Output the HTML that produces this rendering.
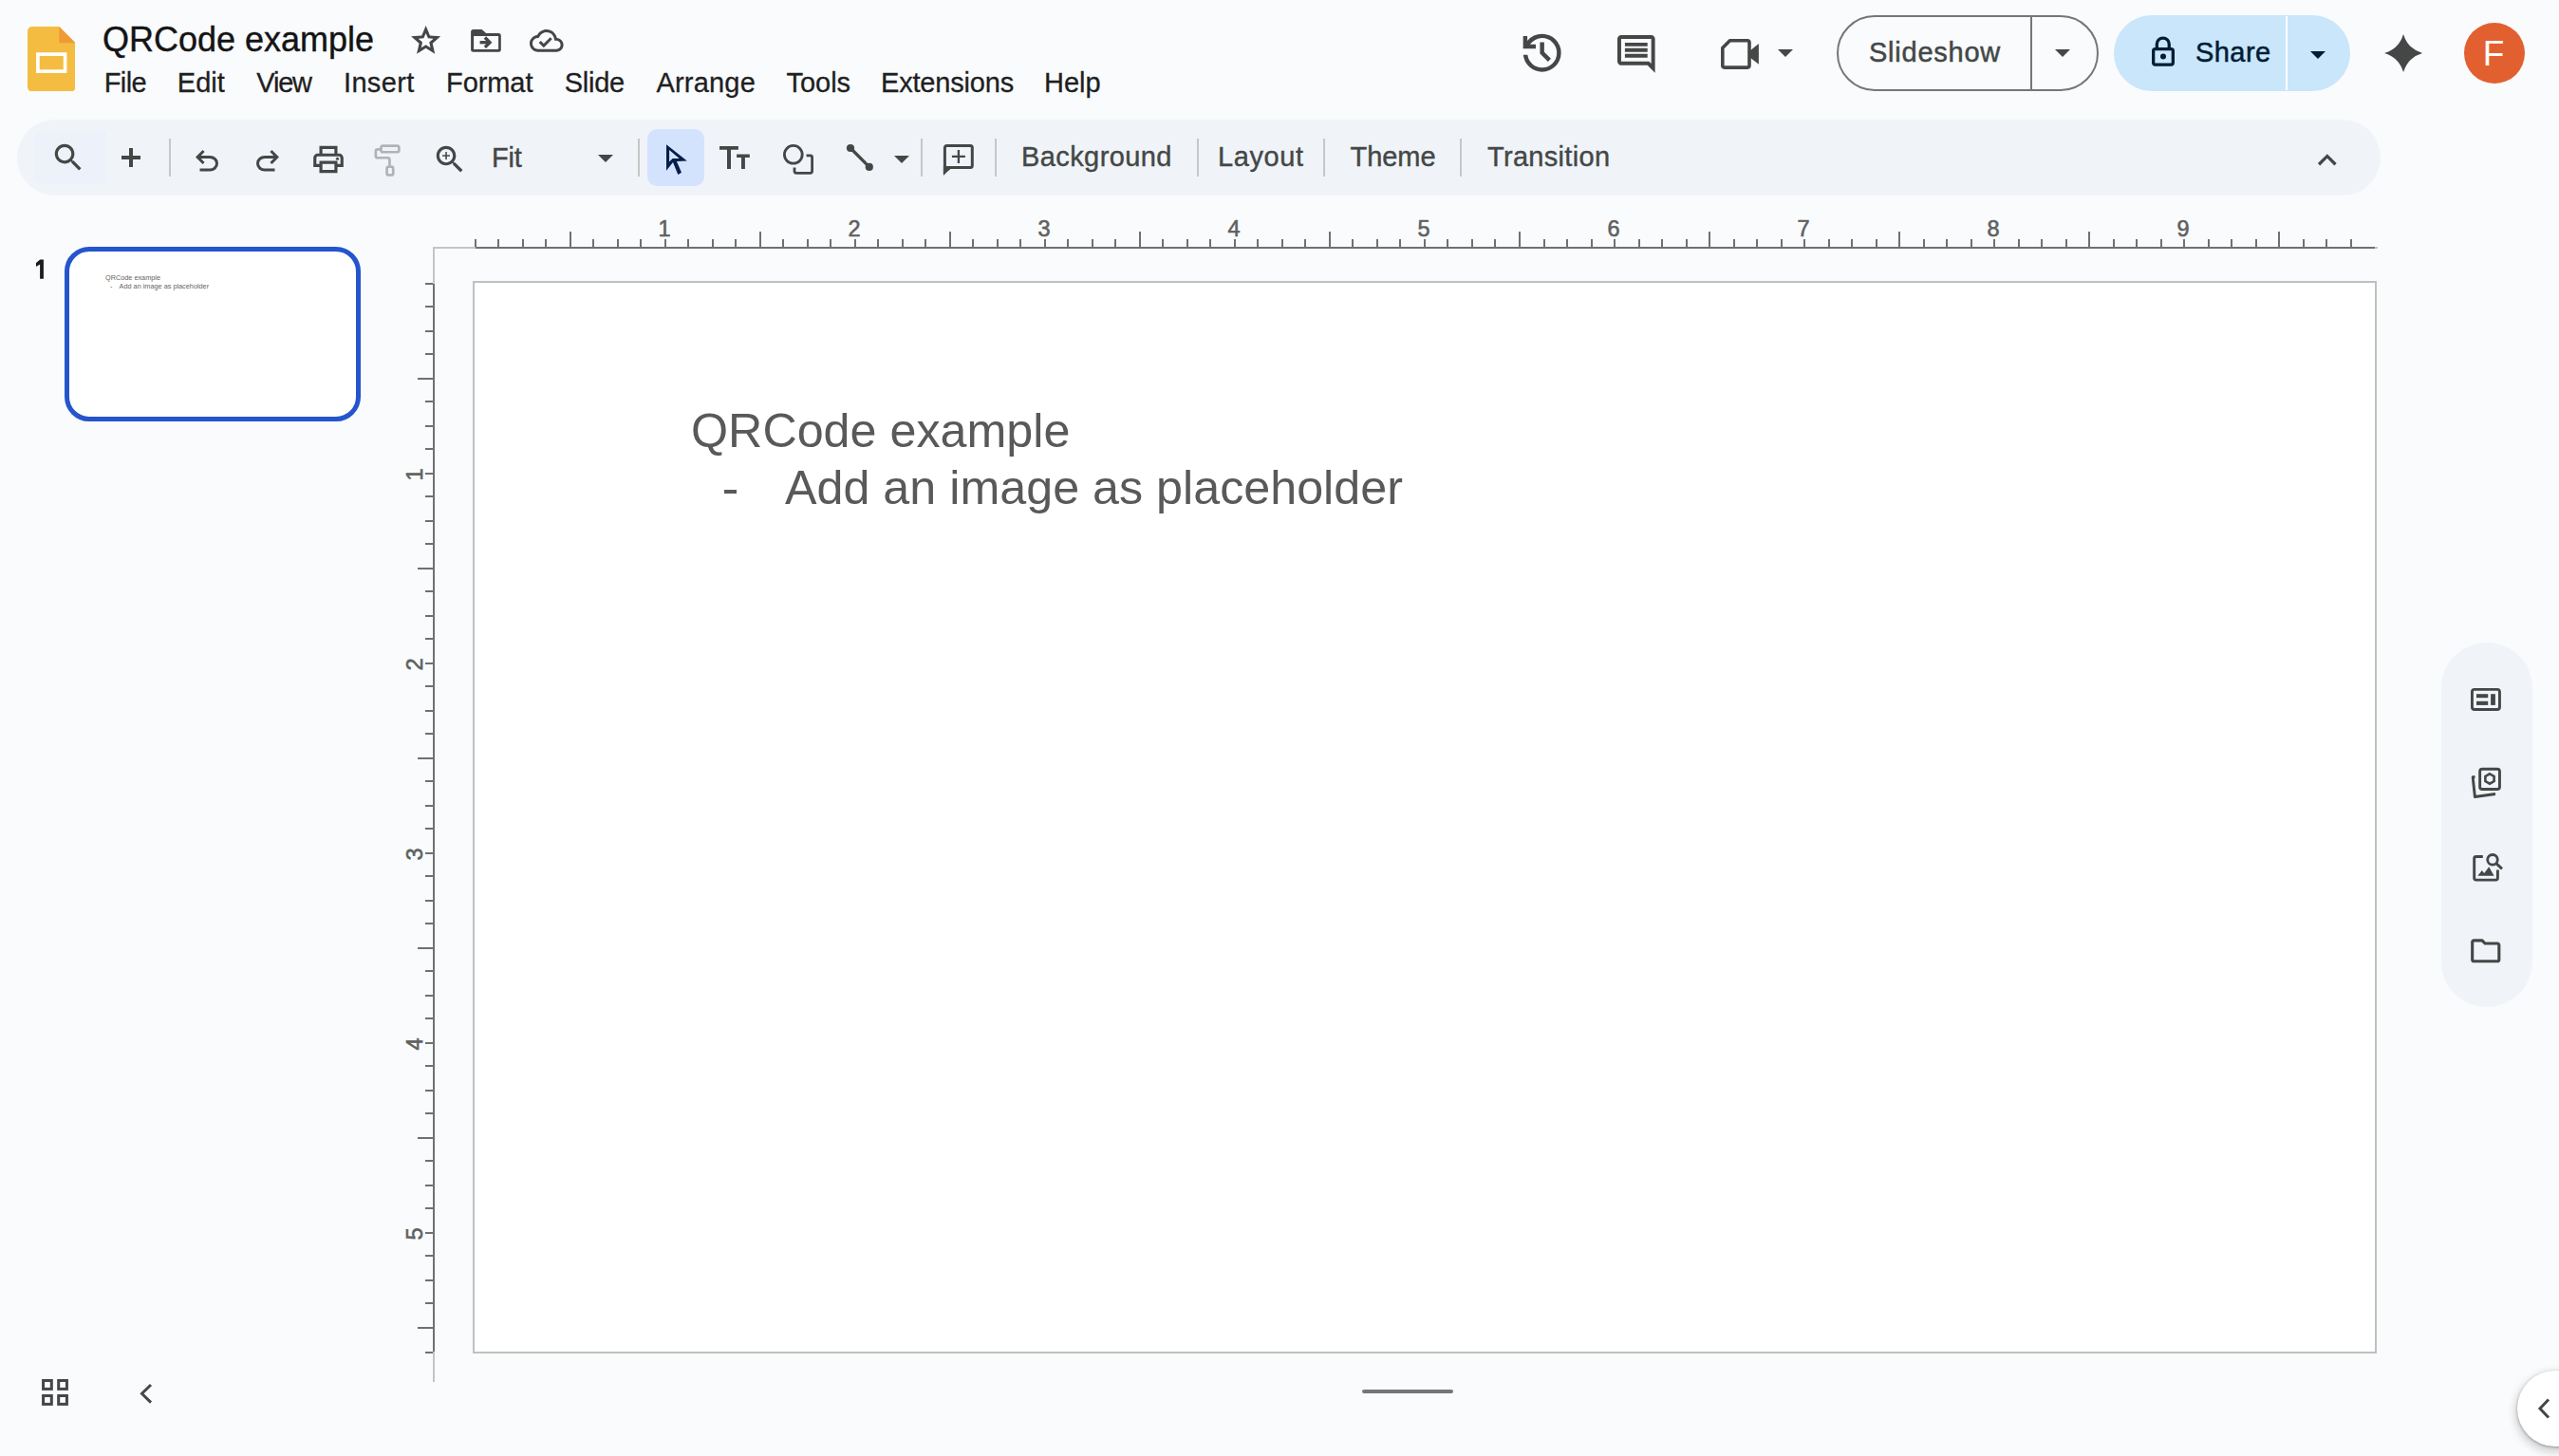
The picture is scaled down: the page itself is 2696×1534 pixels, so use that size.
<!DOCTYPE html>
<html><head><meta charset="utf-8">
<style>
html,body{margin:0;padding:0;}
body{width:2696px;height:1534px;overflow:hidden;background:#f9fbfd;position:relative;font-family:"Liberation Sans",sans-serif;color:#1f1f1f;}
.a{position:absolute;}
.t{position:absolute;white-space:nowrap;line-height:1;}
svg{position:absolute;display:block;}
.menu{font-size:29px;color:#1f1f1f;top:73px;-webkit-text-stroke:0.3px #1f1f1f;}
.tb{font-size:29px;color:#444746;top:151px;-webkit-text-stroke:0.4px #444746;}
.dv{position:absolute;width:2px;background:#c7c7c7;top:146px;height:40px;}
.ic{fill:#444746;}
</style></head><body>

<!-- logo -->
<svg style="left:28.76px;top:27.6px" width="50.5" height="68.6" viewBox="0 0 50.5 68.6">
  <path d="M5 0H33.24L50.5 17.2V63.6a5 5 0 0 1 -5 5H5a5 5 0 0 1 -5 -5V5a5 5 0 0 1 5 -5z" fill="#f4bc40"/>
  <path d="M33.24 0L50.5 17.2H33.24z" fill="#f09a36"/>
  <rect x="10.89" y="29.1" width="28.7" height="18.05" fill="none" stroke="#fff" stroke-width="3.7"/>
</svg>

<div class="t" style="left:108px;top:24px;font-size:36px;color:#141414;-webkit-text-stroke:0.4px #141414;">QRCode example</div>

<!-- title icons -->
<svg style="left:429.6px;top:24.0px" width="37.3" height="37.3" viewBox="0 -960 960 960"><path class="ic" d="m354-287 126-76 126 77-33-144 111-96-146-13-58-136-58 135-146 13 111 97-33 143ZM233-120l65-281L80-590l288-25 112-265 112 265 288 25-218 189 65 281-247-149-247 149Z"/></svg>
<svg style="left:494px;top:29px" width="36" height="28" viewBox="0 0 36 28"><path class="ic" fill-rule="evenodd" d="M4.6 2H13.6L18.1 6H31.3a2.5 2.5 0 0 1 2.5 2.5V23.2a2.5 2.5 0 0 1 -2.5 2.5H4.6a2.5 2.5 0 0 1 -2.5 -2.5V4.5a2.5 2.5 0 0 1 2.5 -2.5ZM5.1 9V22.9H31.1V9Z"/><rect x="11.6" y="14.05" width="9" height="3.3" fill="#444746"/><path d="M16.9 10.5L22.1 15.7L16.9 20.9" fill="none" stroke="#444746" stroke-width="3.3"/></svg>
<svg style="left:558.1px;top:25.1px" width="35.6" height="35.6" viewBox="0 0 24 24"><path class="ic" d="M19.35 10.04C18.67 6.59 15.64 4 12 4 9.11 4 6.6 5.64 5.35 8.04 2.34 8.36 0 10.91 0 14c0 3.31 2.69 6 6 6h13c2.76 0 5-2.24 5-5 0-2.64-2.05-4.78-4.65-4.96zM19 18H6c-2.21 0-4-1.79-4-4 0-2.05 1.53-3.76 3.56-3.97l1.07-.11.5-.95C8.08 7.14 9.94 6 12 6c2.62 0 4.88 1.86 5.39 4.43l.3 1.5 1.53.11c1.56.1 2.78 1.41 2.78 2.96 0 1.65-1.35 3-3 3zm-9-3.82l-2.09-2.09L6.5 13.5 10 17l6.01-6.01-1.41-1.41z"/></svg>

<!-- menu -->
<div class="t menu" style="left:109.7px;letter-spacing:-0.57px">File</div>
<div class="t menu" style="left:186.8px;letter-spacing:0px">Edit</div>
<div class="t menu" style="left:270.3px;letter-spacing:-1.2px">View</div>
<div class="t menu" style="left:362px;letter-spacing:0.34px">Insert</div>
<div class="t menu" style="left:470px;letter-spacing:-0.08px">Format</div>
<div class="t menu" style="left:594.8px;letter-spacing:-0.27px">Slide</div>
<div class="t menu" style="left:691.4px;letter-spacing:0.2px">Arrange</div>
<div class="t menu" style="left:828.4px;letter-spacing:0px">Tools</div>
<div class="t menu" style="left:928px;letter-spacing:-0.19px">Extensions</div>
<div class="t menu" style="left:1100px;letter-spacing:0px">Help</div>

<!-- toolbar -->
<div class="a" style="left:18px;top:126px;width:2490px;height:80px;border-radius:40px;background:#f0f4f9;"></div>


<!-- search box bg -->
<div class="a" style="left:36px;top:138px;width:76px;height:56px;border-radius:8px 0 0 8px;background:#edf2fa;"></div>
<svg style="left:53.2px;top:147.2px" width="38.1" height="38.1" viewBox="0 0 24 24"><path class="ic" d="M15.5 14h-.79l-.28-.27C15.41 12.59 16 11.11 16 9.5 16 5.91 13.09 3 9.5 3S3 5.91 3 9.5 5.91 16 9.5 16c1.61 0 3.09-.59 4.23-1.57l.27.28v.79l5 4.99L20.49 19l-4.99-5zm-6 0C7.01 14 5 11.990 5 9.5S7.01 5 9.5 5 14 7.01 14 9.5 11.99 14 9.5 14z"/></svg>
<svg style="left:128px;top:155.7px" width="20" height="20" viewBox="0 0 20 20"><path class="ic" d="M8 0h4v8h8v4h-8v8H8v-8H0V8h8z"/></svg>
<div class="dv" style="left:178px"></div>
<svg style="left:200px;top:152px" width="36" height="36" viewBox="0 -960 960 960"><path class="ic" d="M280-200v-80h284q63 0 109.5-40T720-420q0-60-46.5-100T564-560H312l104 104-56 56-200-200 200-200 56 56-104 104h252q97 0 166.5 63T800-420q0 94-69.5 157T564-200H280Z"/></svg>
<svg style="left:264px;top:152px" width="36" height="36" viewBox="0 -960 960 960"><path class="ic" d="M396-200q-97 0-166.5-63T160-420q0-94 69.5-157T396-640h252L544-744l56-56 200 200-200 200-56-56 104-104H396q-63 0-109.5 40T240-420q0 60 46.5 100T396-280h284v80H396Z"/></svg>
<svg style="left:327px;top:148.5px" width="38" height="38" viewBox="0 0 24 24"><path class="ic" d="M19 8h-1V3H6v5H5c-1.66 0-3 1.34-3 3v6h4v4h12v-4h4v-6c0-1.66-1.34-3-3-3zM8 5h8v3H8V5zm8 12v2H8v-4h8v2zm2-2v-2H6v2H4v-4c0-.55.45-1 1-1h14c.55 0 1 .45 1 1v4h-2z"/><circle class="ic" cx="18" cy="11.5" r="1"/></svg>
<svg style="left:392px;top:150px" width="32" height="38" viewBox="0 0 32 38">
 <rect x="9.45" y="3.55" width="18.9" height="6.7" rx="2" fill="none" stroke="#b1b3b6" stroke-width="2.7"/>
 <path d="M9.4 7.3H5.85a2 2 0 0 0 -2 2V14.25a2 2 0 0 0 2 2H16.45a2 2 0 0 1 2 2V24.2" fill="none" stroke="#b1b3b6" stroke-width="2.7"/>
 <rect x="15.55" y="25.55" width="6.7" height="8.9" rx="2" fill="none" stroke="#b1b3b6" stroke-width="2.7"/>
</svg>
<svg style="left:455.25px;top:149.25px" width="38" height="38" viewBox="0 0 24 24"><path class="ic" d="M15.5 14h-.79l-.28-.27C15.41 12.59 16 11.11 16 9.5 16 5.91 13.09 3 9.5 3S3 5.91 3 9.5 5.91 16 9.5 16c1.61 0 3.09-.59 4.23-1.57l.27.28v.79l5 4.99L20.49 19l-4.99-5zm-6 0C7.01 14 5 11.99 5 9.5S7.01 5 9.5 5 14 7.01 14 9.5 11.99 14 9.5 14zm.5-7H9v2H7v1h2v2h1v-2h2V9h-2z"/></svg>
<div class="t tb" style="left:518px;top:152px;letter-spacing:-0.2px">Fit</div>
<svg style="left:630px;top:163px" width="16" height="8" viewBox="0 0 16 8"><path class="ic" d="M0 0h16l-8 8z"/></svg>
<div class="dv" style="left:672px"></div>
<div class="a" style="left:682px;top:136px;width:60px;height:60px;border-radius:10px;background:#d3e3fd;"></div>
<svg style="left:698px;top:148px" width="36" height="40" viewBox="0 0 36 40"><path d="M4 4.3V31.7L11 23L16.3 36L20 33.8L14.9 21.9L25.8 21.5Z" fill="#041e49"/><path d="M7.1 10V22.6L10.6 19H17.7Z" fill="#d3e3fd"/></svg>
<svg style="left:756px;top:152px" width="36" height="28" viewBox="0 0 36 28"><path class="ic" d="M2 2.1H21.9V5.8H14V26H10V5.8H2Z M20.1 10.4H33.8V13.9H28.9V26H25V13.9H20.1Z"/></svg>
<svg style="left:822px;top:150px" width="38" height="38" viewBox="0 0 38 38"><circle cx="13.8" cy="12.8" r="9.4" fill="none" stroke="#444746" stroke-width="2.8"/><path d="M27.6 13.9H31.6a2 2 0 0 1 2 2V30.3a2 2 0 0 1 -2 2H17a2 2 0 0 1 -2 -2V26.4" fill="none" stroke="#444746" stroke-width="2.8"/></svg>
<svg style="left:888px;top:148px" width="36" height="36" viewBox="0 0 36 36"><path d="M8 8L27.8 27.9" stroke="#444746" stroke-width="3.2"/><circle cx="8" cy="8" r="4.1" fill="#444746"/><circle cx="27.8" cy="27.9" r="4.1" fill="#444746"/></svg>
<svg style="left:942px;top:164px" width="16" height="8" viewBox="0 0 16 8"><path class="ic" d="M0 0h16l-8 8z"/></svg>
<div class="dv" style="left:970px"></div>
<svg style="left:992px;top:150px" width="38" height="38" viewBox="0 0 38 38"><path d="M3.4 5.5a2 2 0 0 1 2 -2H30.3a2 2 0 0 1 2 2V24.4a2 2 0 0 1 -2 2H8.4L3.4 31.4z" fill="none" stroke="#444746" stroke-width="3" stroke-linejoin="miter"/><path d="M1.9 24.9H9.5V27.9L1.9 33.6Z" fill="#444746"/><path d="M16.75 8H19.05V13.75H24.9V16.05H19.05V21.9H16.75V16.05H10.9V13.75H16.75Z" fill="#444746"/></svg>
<div class="dv" style="left:1048px"></div>
<div class="t tb" style="left:1076px;letter-spacing:0.41px">Background</div>
<div class="dv" style="left:1261px"></div>
<div class="t tb" style="left:1283px;letter-spacing:0.62px">Layout</div>
<div class="dv" style="left:1394px"></div>
<div class="t tb" style="left:1422.5px;letter-spacing:-0.05px">Theme</div>
<div class="dv" style="left:1538px"></div>
<div class="t tb" style="left:1567px;letter-spacing:0.31px">Transition</div>
<svg style="left:2432.2px;top:148.7px" width="39.6" height="39.6" viewBox="0 0 24 24"><path class="ic" d="M12 8l-6 6 1.41 1.41L12 10.83l4.59 4.58L18 14z"/></svg>


<!-- top right -->
<svg style="left:1598px;top:29px" width="53.3" height="53.3" viewBox="0 -960 960 960"><path class="ic" d="M480-120q-138 0-240.5-91.5T122-440h82q14 104 92.5 172T480-200q117 0 198.5-81.5T760-480q0-117-81.5-198.5T480-760q-69 0-129 32t-101 88h110v80H120v-240h80v94q51-64 124.5-99T480-840q75 0 140.5 28.5t114 77q48.5 48.5 77 114T840-480q0 75-28.5 140.5t-77 114q-48.5 48.5-114 77T480-120Zm112-192L440-464v-216h80v184l128 128-56 56Z"/></svg>
<svg style="left:1700px;top:33px" width="47.6" height="47.6" viewBox="0 0 24 24"><path class="ic" d="M21.99 4c0-1.1-.89-2-1.99-2H4c-1.1 0-2 .9-2 2v12c0 1.1.9 2 2 2h14l4 4-.01-18zM20 4v13.17L18.83 16H4V4h16zM6 12h12v2H6zm0-3h12v2H6zm0-3h12v2H6z"/></svg>
<svg style="left:1810px;top:38px" width="46" height="38" viewBox="0 0 46 38">
 <path d="M12.5 4.8H31a2 2 0 0 1 2 2V31.1a2 2 0 0 1 -2 2H6.8a2 2 0 0 1 -2 -2V12.5Z" fill="none" stroke="#444746" stroke-width="3.6" stroke-linejoin="round"/>
 <path d="M33 16L42.9 8V29.8L33 22Z" fill="#444746"/>
</svg>
<svg style="left:1870px;top:48px" width="22" height="16" viewBox="0 0 22 16"><path class="ic" d="M3 4h16l-8 8z"/></svg>

<div class="a" style="left:1935px;top:16px;width:272px;height:76px;border:2px solid #747775;border-radius:40px;"></div>
<div class="a" style="left:2139px;top:17px;width:2px;height:78px;background:#747775;"></div>
<div class="t" style="left:1969px;top:41px;font-size:29px;letter-spacing:0.76px;color:#444746;-webkit-text-stroke:0.5px #444746;">Slideshow</div>
<svg style="left:2162px;top:48px" width="22" height="16" viewBox="0 0 22 16"><path class="ic" d="M3 4h16l-8 8z"/></svg>

<div class="a" style="left:2227px;top:16px;width:249px;height:80px;border-radius:40px;background:#c9e6fb;"></div>
<div class="a" style="left:2408px;top:17px;width:2px;height:78px;background:#ffffff;"></div>
<svg style="left:2262px;top:35px" width="34" height="38" viewBox="0 0 34 38">
 <path d="M10.35 16.55V11.5a6.45 6.45 0 0 1 12.9 0V16.55" fill="none" stroke="#001d35" stroke-width="3.3"/>
 <rect x="6.65" y="16.55" width="20.7" height="16.5" rx="2" fill="none" stroke="#001d35" stroke-width="3.3"/>
 <circle cx="17" cy="24.4" r="3" fill="#001d35"/>
</svg>
<div class="t" style="left:2313px;top:41px;font-size:29px;letter-spacing:0.45px;color:#001d35;-webkit-text-stroke:0.5px #001d35;">Share</div>
<svg style="left:2431px;top:50px" width="22" height="16" viewBox="0 0 22 16"><path d="M3 4h16l-8 8z" fill="#001d35"/></svg>

<svg style="left:2510.4px;top:34.2px" width="44.1" height="44.1" viewBox="0 0 44 44"><path d="M22 2Q26.6 17.4 42 22Q26.6 26.6 22 42Q17.4 26.6 2 22Q17.4 17.4 22 2Z" fill="#444746"/></svg>
<div class="a" style="left:2596px;top:24px;width:64px;height:64px;border-radius:50%;background:#e2602f;"></div>
<div class="t" style="left:2615.7px;top:37.7px;font-size:37px;color:#fff;">F</div>


<!-- filmstrip -->
<svg style="left:35px;top:270px" width="14" height="26" viewBox="0 0 14 26"><path d="M7.2 3.4H10.9V23.8H7.1V8.4L3 10.9V7.1Z" fill="#1b1b1b"/></svg>
<div class="a" style="left:68px;top:260px;width:302px;height:174px;border:5px solid #2455cc;border-radius:26px;background:#fff;"></div>
<div class="t" style="left:111px;top:289px;font-size:7.3px;color:#646464;">QRCode example</div>
<div class="t" style="left:116px;top:297.6px;font-size:7.3px;color:#646464;">-</div>
<div class="t" style="left:125.6px;top:297.6px;font-size:7.3px;color:#646464;">Add an image as placeholder</div>


<!-- rulers -->
<div class="a" style="left:456px;top:260px;width:45px;height:2px;background:#c3c5c3;"></div>
<div class="a" style="left:501px;top:260px;width:2001px;height:2px;background:#6f716f;"></div>
<div class="a" style="left:2502px;top:260px;width:3px;height:2px;background:#c3c5c3;"></div>
<div class="a" style="left:456px;top:260px;width:2px;height:39px;background:#c3c5c3;"></div>
<div class="a" style="left:456px;top:299px;width:2px;height:1125px;background:#6f716f;"></div>
<div class="a" style="left:456px;top:1424px;width:2px;height:32px;background:#c3c5c3;"></div>
<div class="a" style="left:500px;top:252px;width:2px;height:8px;background:#6f716f;"></div>
<div class="a" style="left:524px;top:252px;width:2px;height:8px;background:#6f716f;"></div>
<div class="a" style="left:550px;top:252px;width:2px;height:8px;background:#6f716f;"></div>
<div class="a" style="left:574px;top:252px;width:2px;height:8px;background:#6f716f;"></div>
<div class="a" style="left:600px;top:244px;width:2px;height:16px;background:#6f716f;"></div>
<div class="a" style="left:624px;top:252px;width:2px;height:8px;background:#6f716f;"></div>
<div class="a" style="left:650px;top:252px;width:2px;height:8px;background:#6f716f;"></div>
<div class="a" style="left:674px;top:252px;width:2px;height:8px;background:#6f716f;"></div>
<div class="a" style="left:700px;top:252px;width:2px;height:8px;background:#6f716f;"></div>
<div class="a" style="left:724px;top:252px;width:2px;height:8px;background:#6f716f;"></div>
<div class="a" style="left:750px;top:252px;width:2px;height:8px;background:#6f716f;"></div>
<div class="a" style="left:774px;top:252px;width:2px;height:8px;background:#6f716f;"></div>
<div class="a" style="left:800px;top:244px;width:2px;height:16px;background:#6f716f;"></div>
<div class="a" style="left:824px;top:252px;width:2px;height:8px;background:#6f716f;"></div>
<div class="a" style="left:850px;top:252px;width:2px;height:8px;background:#6f716f;"></div>
<div class="a" style="left:874px;top:252px;width:2px;height:8px;background:#6f716f;"></div>
<div class="a" style="left:900px;top:252px;width:2px;height:8px;background:#6f716f;"></div>
<div class="a" style="left:924px;top:252px;width:2px;height:8px;background:#6f716f;"></div>
<div class="a" style="left:950px;top:252px;width:2px;height:8px;background:#6f716f;"></div>
<div class="a" style="left:974px;top:252px;width:2px;height:8px;background:#6f716f;"></div>
<div class="a" style="left:1000px;top:244px;width:2px;height:16px;background:#6f716f;"></div>
<div class="a" style="left:1024px;top:252px;width:2px;height:8px;background:#6f716f;"></div>
<div class="a" style="left:1050px;top:252px;width:2px;height:8px;background:#6f716f;"></div>
<div class="a" style="left:1074px;top:252px;width:2px;height:8px;background:#6f716f;"></div>
<div class="a" style="left:1100px;top:252px;width:2px;height:8px;background:#6f716f;"></div>
<div class="a" style="left:1124px;top:252px;width:2px;height:8px;background:#6f716f;"></div>
<div class="a" style="left:1150px;top:252px;width:2px;height:8px;background:#6f716f;"></div>
<div class="a" style="left:1174px;top:252px;width:2px;height:8px;background:#6f716f;"></div>
<div class="a" style="left:1200px;top:244px;width:2px;height:16px;background:#6f716f;"></div>
<div class="a" style="left:1224px;top:252px;width:2px;height:8px;background:#6f716f;"></div>
<div class="a" style="left:1250px;top:252px;width:2px;height:8px;background:#6f716f;"></div>
<div class="a" style="left:1274px;top:252px;width:2px;height:8px;background:#6f716f;"></div>
<div class="a" style="left:1300px;top:252px;width:2px;height:8px;background:#6f716f;"></div>
<div class="a" style="left:1324px;top:252px;width:2px;height:8px;background:#6f716f;"></div>
<div class="a" style="left:1350px;top:252px;width:2px;height:8px;background:#6f716f;"></div>
<div class="a" style="left:1374px;top:252px;width:2px;height:8px;background:#6f716f;"></div>
<div class="a" style="left:1400px;top:244px;width:2px;height:16px;background:#6f716f;"></div>
<div class="a" style="left:1424px;top:252px;width:2px;height:8px;background:#6f716f;"></div>
<div class="a" style="left:1450px;top:252px;width:2px;height:8px;background:#6f716f;"></div>
<div class="a" style="left:1474px;top:252px;width:2px;height:8px;background:#6f716f;"></div>
<div class="a" style="left:1500px;top:252px;width:2px;height:8px;background:#6f716f;"></div>
<div class="a" style="left:1524px;top:252px;width:2px;height:8px;background:#6f716f;"></div>
<div class="a" style="left:1550px;top:252px;width:2px;height:8px;background:#6f716f;"></div>
<div class="a" style="left:1574px;top:252px;width:2px;height:8px;background:#6f716f;"></div>
<div class="a" style="left:1600px;top:244px;width:2px;height:16px;background:#6f716f;"></div>
<div class="a" style="left:1626px;top:252px;width:2px;height:8px;background:#6f716f;"></div>
<div class="a" style="left:1650px;top:252px;width:2px;height:8px;background:#6f716f;"></div>
<div class="a" style="left:1676px;top:252px;width:2px;height:8px;background:#6f716f;"></div>
<div class="a" style="left:1700px;top:252px;width:2px;height:8px;background:#6f716f;"></div>
<div class="a" style="left:1726px;top:252px;width:2px;height:8px;background:#6f716f;"></div>
<div class="a" style="left:1750px;top:252px;width:2px;height:8px;background:#6f716f;"></div>
<div class="a" style="left:1776px;top:252px;width:2px;height:8px;background:#6f716f;"></div>
<div class="a" style="left:1800px;top:244px;width:2px;height:16px;background:#6f716f;"></div>
<div class="a" style="left:1826px;top:252px;width:2px;height:8px;background:#6f716f;"></div>
<div class="a" style="left:1850px;top:252px;width:2px;height:8px;background:#6f716f;"></div>
<div class="a" style="left:1876px;top:252px;width:2px;height:8px;background:#6f716f;"></div>
<div class="a" style="left:1900px;top:252px;width:2px;height:8px;background:#6f716f;"></div>
<div class="a" style="left:1926px;top:252px;width:2px;height:8px;background:#6f716f;"></div>
<div class="a" style="left:1950px;top:252px;width:2px;height:8px;background:#6f716f;"></div>
<div class="a" style="left:1976px;top:252px;width:2px;height:8px;background:#6f716f;"></div>
<div class="a" style="left:2000px;top:244px;width:2px;height:16px;background:#6f716f;"></div>
<div class="a" style="left:2026px;top:252px;width:2px;height:8px;background:#6f716f;"></div>
<div class="a" style="left:2050px;top:252px;width:2px;height:8px;background:#6f716f;"></div>
<div class="a" style="left:2076px;top:252px;width:2px;height:8px;background:#6f716f;"></div>
<div class="a" style="left:2100px;top:252px;width:2px;height:8px;background:#6f716f;"></div>
<div class="a" style="left:2126px;top:252px;width:2px;height:8px;background:#6f716f;"></div>
<div class="a" style="left:2150px;top:252px;width:2px;height:8px;background:#6f716f;"></div>
<div class="a" style="left:2176px;top:252px;width:2px;height:8px;background:#6f716f;"></div>
<div class="a" style="left:2200px;top:244px;width:2px;height:16px;background:#6f716f;"></div>
<div class="a" style="left:2226px;top:252px;width:2px;height:8px;background:#6f716f;"></div>
<div class="a" style="left:2250px;top:252px;width:2px;height:8px;background:#6f716f;"></div>
<div class="a" style="left:2276px;top:252px;width:2px;height:8px;background:#6f716f;"></div>
<div class="a" style="left:2300px;top:252px;width:2px;height:8px;background:#6f716f;"></div>
<div class="a" style="left:2326px;top:252px;width:2px;height:8px;background:#6f716f;"></div>
<div class="a" style="left:2350px;top:252px;width:2px;height:8px;background:#6f716f;"></div>
<div class="a" style="left:2376px;top:252px;width:2px;height:8px;background:#6f716f;"></div>
<div class="a" style="left:2400px;top:244px;width:2px;height:16px;background:#6f716f;"></div>
<div class="a" style="left:2426px;top:252px;width:2px;height:8px;background:#6f716f;"></div>
<div class="a" style="left:2450px;top:252px;width:2px;height:8px;background:#6f716f;"></div>
<div class="a" style="left:2476px;top:252px;width:2px;height:8px;background:#6f716f;"></div>
<div class="t" style="left:680px;width:40px;text-align:center;top:230px;font-size:23.5px;color:#5f6160;-webkit-text-stroke:0.6px #5f6160;">1</div>
<div class="t" style="left:880px;width:40px;text-align:center;top:230px;font-size:23.5px;color:#5f6160;-webkit-text-stroke:0.6px #5f6160;">2</div>
<div class="t" style="left:1080px;width:40px;text-align:center;top:230px;font-size:23.5px;color:#5f6160;-webkit-text-stroke:0.6px #5f6160;">3</div>
<div class="t" style="left:1280px;width:40px;text-align:center;top:230px;font-size:23.5px;color:#5f6160;-webkit-text-stroke:0.6px #5f6160;">4</div>
<div class="t" style="left:1480px;width:40px;text-align:center;top:230px;font-size:23.5px;color:#5f6160;-webkit-text-stroke:0.6px #5f6160;">5</div>
<div class="t" style="left:1680px;width:40px;text-align:center;top:230px;font-size:23.5px;color:#5f6160;-webkit-text-stroke:0.6px #5f6160;">6</div>
<div class="t" style="left:1880px;width:40px;text-align:center;top:230px;font-size:23.5px;color:#5f6160;-webkit-text-stroke:0.6px #5f6160;">7</div>
<div class="t" style="left:2080px;width:40px;text-align:center;top:230px;font-size:23.5px;color:#5f6160;-webkit-text-stroke:0.6px #5f6160;">8</div>
<div class="t" style="left:2280px;width:40px;text-align:center;top:230px;font-size:23.5px;color:#5f6160;-webkit-text-stroke:0.6px #5f6160;">9</div>
<div class="a" style="left:448px;top:298px;width:8px;height:2px;background:#6f716f;"></div>
<div class="a" style="left:448px;top:322px;width:8px;height:2px;background:#6f716f;"></div>
<div class="a" style="left:448px;top:348px;width:8px;height:2px;background:#6f716f;"></div>
<div class="a" style="left:448px;top:372px;width:8px;height:2px;background:#6f716f;"></div>
<div class="a" style="left:440px;top:398px;width:16px;height:2px;background:#6f716f;"></div>
<div class="a" style="left:448px;top:422px;width:8px;height:2px;background:#6f716f;"></div>
<div class="a" style="left:448px;top:448px;width:8px;height:2px;background:#6f716f;"></div>
<div class="a" style="left:448px;top:472px;width:8px;height:2px;background:#6f716f;"></div>
<div class="a" style="left:448px;top:498px;width:8px;height:2px;background:#6f716f;"></div>
<div class="a" style="left:448px;top:522px;width:8px;height:2px;background:#6f716f;"></div>
<div class="a" style="left:448px;top:548px;width:8px;height:2px;background:#6f716f;"></div>
<div class="a" style="left:448px;top:572px;width:8px;height:2px;background:#6f716f;"></div>
<div class="a" style="left:440px;top:598px;width:16px;height:2px;background:#6f716f;"></div>
<div class="a" style="left:448px;top:622px;width:8px;height:2px;background:#6f716f;"></div>
<div class="a" style="left:448px;top:648px;width:8px;height:2px;background:#6f716f;"></div>
<div class="a" style="left:448px;top:672px;width:8px;height:2px;background:#6f716f;"></div>
<div class="a" style="left:448px;top:698px;width:8px;height:2px;background:#6f716f;"></div>
<div class="a" style="left:448px;top:722px;width:8px;height:2px;background:#6f716f;"></div>
<div class="a" style="left:448px;top:748px;width:8px;height:2px;background:#6f716f;"></div>
<div class="a" style="left:448px;top:772px;width:8px;height:2px;background:#6f716f;"></div>
<div class="a" style="left:440px;top:798px;width:16px;height:2px;background:#6f716f;"></div>
<div class="a" style="left:448px;top:822px;width:8px;height:2px;background:#6f716f;"></div>
<div class="a" style="left:448px;top:848px;width:8px;height:2px;background:#6f716f;"></div>
<div class="a" style="left:448px;top:872px;width:8px;height:2px;background:#6f716f;"></div>
<div class="a" style="left:448px;top:898px;width:8px;height:2px;background:#6f716f;"></div>
<div class="a" style="left:448px;top:922px;width:8px;height:2px;background:#6f716f;"></div>
<div class="a" style="left:448px;top:948px;width:8px;height:2px;background:#6f716f;"></div>
<div class="a" style="left:448px;top:972px;width:8px;height:2px;background:#6f716f;"></div>
<div class="a" style="left:440px;top:998px;width:16px;height:2px;background:#6f716f;"></div>
<div class="a" style="left:448px;top:1022px;width:8px;height:2px;background:#6f716f;"></div>
<div class="a" style="left:448px;top:1048px;width:8px;height:2px;background:#6f716f;"></div>
<div class="a" style="left:448px;top:1072px;width:8px;height:2px;background:#6f716f;"></div>
<div class="a" style="left:448px;top:1098px;width:8px;height:2px;background:#6f716f;"></div>
<div class="a" style="left:448px;top:1122px;width:8px;height:2px;background:#6f716f;"></div>
<div class="a" style="left:448px;top:1148px;width:8px;height:2px;background:#6f716f;"></div>
<div class="a" style="left:448px;top:1172px;width:8px;height:2px;background:#6f716f;"></div>
<div class="a" style="left:440px;top:1198px;width:16px;height:2px;background:#6f716f;"></div>
<div class="a" style="left:448px;top:1222px;width:8px;height:2px;background:#6f716f;"></div>
<div class="a" style="left:448px;top:1248px;width:8px;height:2px;background:#6f716f;"></div>
<div class="a" style="left:448px;top:1272px;width:8px;height:2px;background:#6f716f;"></div>
<div class="a" style="left:448px;top:1298px;width:8px;height:2px;background:#6f716f;"></div>
<div class="a" style="left:448px;top:1322px;width:8px;height:2px;background:#6f716f;"></div>
<div class="a" style="left:448px;top:1348px;width:8px;height:2px;background:#6f716f;"></div>
<div class="a" style="left:448px;top:1372px;width:8px;height:2px;background:#6f716f;"></div>
<div class="a" style="left:440px;top:1398px;width:16px;height:2px;background:#6f716f;"></div>
<div class="a" style="left:448px;top:1424px;width:8px;height:2px;background:#6f716f;"></div>
<div class="t" style="left:416.5px;top:489px;width:40px;height:22px;text-align:center;font-size:23.5px;color:#5f6160;-webkit-text-stroke:0.6px #5f6160;transform:rotate(-90deg);transform-origin:20px 11px;">1</div>
<div class="t" style="left:416.5px;top:689px;width:40px;height:22px;text-align:center;font-size:23.5px;color:#5f6160;-webkit-text-stroke:0.6px #5f6160;transform:rotate(-90deg);transform-origin:20px 11px;">2</div>
<div class="t" style="left:416.5px;top:889px;width:40px;height:22px;text-align:center;font-size:23.5px;color:#5f6160;-webkit-text-stroke:0.6px #5f6160;transform:rotate(-90deg);transform-origin:20px 11px;">3</div>
<div class="t" style="left:416.5px;top:1089px;width:40px;height:22px;text-align:center;font-size:23.5px;color:#5f6160;-webkit-text-stroke:0.6px #5f6160;transform:rotate(-90deg);transform-origin:20px 11px;">4</div>
<div class="t" style="left:416.5px;top:1289px;width:40px;height:22px;text-align:center;font-size:23.5px;color:#5f6160;-webkit-text-stroke:0.6px #5f6160;transform:rotate(-90deg);transform-origin:20px 11px;">5</div>
<!-- slide -->
<div class="a" style="left:498px;top:296px;width:2002px;height:1126px;border:2px solid #bfc1be;background:#fff;"></div>
<div class="t" style="left:728px;top:429px;font-size:50.25px;color:#595959;">QRCode example</div>
<div class="a" style="left:763px;top:516px;width:13px;height:4px;background:#595959;"></div>
<div class="t" style="left:827px;top:489px;font-size:50.25px;color:#595959;">Add an image as placeholder</div>


<!-- side panel -->
<div class="a" style="left:2572px;top:677px;width:96px;height:384px;border-radius:48px;background:#f0f4f9;"></div>
<svg style="left:2600px;top:720px" width="40" height="34" viewBox="0 0 40 34">
 <rect x="4.45" y="6.35" width="29" height="21.1" rx="2.5" fill="none" stroke="#444746" stroke-width="2.9"/>
 <rect x="9" y="11.2" width="12.25" height="4" fill="#444746"/>
 <rect x="9" y="18.8" width="12.25" height="4.1" fill="#444746"/>
 <rect x="24.1" y="11.2" width="4.8" height="11.7" fill="#444746"/>
</svg>
<svg style="left:2600px;top:805px" width="40" height="40" viewBox="0 0 40 40">
 <rect x="12.65" y="5.25" width="20.8" height="21.2" rx="2.5" fill="none" stroke="#444746" stroke-width="2.9"/>
 <path d="M23 10.3L27.6 12.9V18.1L23 20.7L18.4 18.1V12.9Z" fill="none" stroke="#444746" stroke-width="2.6"/>
 <path d="M7.5 13.4L5.2 13.8L7.4 34.5L29 31.5" fill="none" stroke="#444746" stroke-width="2.9" stroke-linejoin="round"/>
</svg>
<svg style="left:2600px;top:894px" width="40" height="40" viewBox="0 0 40 40">
 <path d="M15.8 8.5H8.7a2 2 0 0 0 -2 2V31.1a2 2 0 0 0 2 2H29.4a2 2 0 0 0 2 -2V22.6" fill="none" stroke="#444746" stroke-width="2.9"/>
 <path d="M10.4 28.8L14.8 23L17.2 26L22.2 19.3L27.6 28.8Z" fill="#444746"/>
 <circle cx="26" cy="11.8" r="5.3" fill="none" stroke="#444746" stroke-width="2.8"/>
 <path d="M29.8 15.6L36 21.4" stroke="#444746" stroke-width="2.9"/>
</svg>
<svg style="left:2599.5px;top:982.7px" width="37.5" height="37.5" viewBox="0 0 24 24"><path class="ic" d="M9.17 6l2 2H20v10H4V6h5.17M10 4H4c-1.1 0-1.99.9-1.99 2L2 18c0 1.1.9 2 2 2h16c1.1 0 2-.9 2-2V8c0-1.1-.9-2-2-2h-8l-2-2z"/></svg>


<!-- bottom -->
<svg style="left:40px;top:1449px" width="36" height="36" viewBox="0 0 36 36">
 <rect x="5.57" y="5.5" width="8.73" height="8.9" fill="none" stroke="#444746" stroke-width="3"/>
 <rect x="21.7" y="5.5" width="8.73" height="8.9" fill="none" stroke="#444746" stroke-width="3"/>
 <rect x="5.57" y="21.5" width="8.73" height="8.9" fill="none" stroke="#444746" stroke-width="3"/>
 <rect x="21.7" y="21.5" width="8.73" height="8.9" fill="none" stroke="#444746" stroke-width="3"/>
</svg>
<svg style="left:136px;top:1450px" width="36" height="36" viewBox="0 0 36 36"><path d="M23 9L13.5 18.3L23 27.6" fill="none" stroke="#444746" stroke-width="3"/></svg>
<div class="a" style="left:1435px;top:1464px;width:96px;height:4px;border-radius:2px;background:#747775;"></div>
<div class="a" style="left:2652px;top:1444px;width:80px;height:80px;border-radius:50%;background:#fff;box-shadow:0 1px 3px rgba(0,0,0,0.3),0 4px 8px 3px rgba(0,0,0,0.15);"></div>
<svg style="left:2664px;top:1466px" width="36" height="36" viewBox="0 0 36 36"><path d="M21 8.5L12 18L21 27.5" fill="none" stroke="#444746" stroke-width="3"/></svg>

</body></html>
